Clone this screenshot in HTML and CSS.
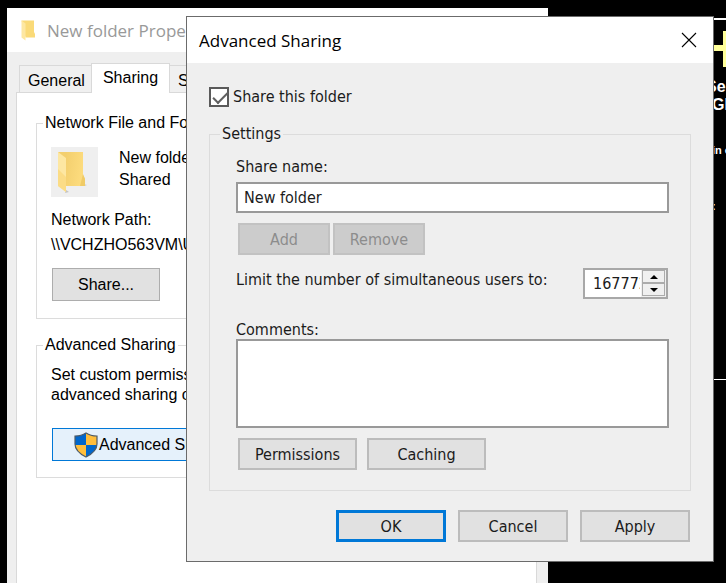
FILE: index.html
```html
<!DOCTYPE html>
<html lang="en">
<head>
    <meta charset="UTF-8">
    <meta name="viewport" content="width=device-width, initial-scale=1.0">
    <title>Advanced Sharing</title>
    <link rel="stylesheet" href="styles.css">
</head>
<body>
    <div class="desktop">
        <!-- Wallpaper info panel, mostly behind the dialog -->
        <div class="wallpaper">
            <div class="wallpaper-plus"></div>
            <p class="wallpaper-title">Se</p>
            <p class="wallpaper-title indent">GI</p>
            <p class="wallpaper-note indent">in o</p>
            <p class="wallpaper-colon indent">:</p>
        </div>

        <section class="window properties">
            <header class="properties-title">
                <svg class="folder-small" viewBox="0 0 30 42" aria-hidden="true">
                    <path d="M1 1h25v23l2 4v7H9z" fill="#fada78"/>
                    <path d="M1 1l8 6v34l-8-6z" fill="#fde7a2"/>
                </svg>
                <h2>New folder Properties</h2>
            </header>
            <nav class="tabs">
                <button class="tab">General</button>
                <button class="tab active">Sharing</button>
                <button class="tab">Security</button>
            </nav>
            <div class="panel">
                <fieldset class="group network">
                    <legend>Network File and Folder Sharing</legend>
                    <div class="folder-row">
                        <div class="folder-box">
                            <svg class="folder-large" viewBox="0 0 30 42" aria-hidden="true">
                                <defs>
                                    <linearGradient id="folderBack" x1="0" y1="0" x2="1" y2="0.2">
                                        <stop offset="0.3" stop-color="#f3cf6e"/>
                                        <stop offset="1" stop-color="#fddc7e"/>
                                    </linearGradient>
                                </defs>
                                <path d="M9 39l3 2-4 1z" fill="#c4c4c4"/>
                                <path d="M27 33l3 1-2 1z" fill="#d0d0d0"/>
                                <path d="M1 1h25v23l2 4v7H9z" fill="url(#folderBack)"/>
                                <path d="M26 23l-3 12h5v-7z" fill="#f0cb66"/>
                                <path d="M1 1l8 6v34l-8-6z" fill="#fde7a2"/>
                                <path d="M1 18l8 8v15l-8-6z" fill="#fbdc86"/>
                            </svg>
                        </div>
                        <p>New folder<br>Shared</p>
                    </div>
                    <p class="path-label">Network Path:</p>
                    <p class="path">\\VCHZHO563VM\Users</p>
                    <button class="share-btn">Share...</button>
                </fieldset>
                <fieldset class="group advanced">
                    <legend>Advanced Sharing</legend>
                    <p>Set custom permissions, create multiple shares, and set other<br>advanced sharing options.</p>
                    <button class="advanced-btn">
                        <svg class="shield" viewBox="0 0 24 26" aria-hidden="true">
                            <path d="M12 1v12H1V4c5 0 8-1 11-3z" fill="#0067cc"/>
                            <path d="M12 1c3 2 6 3 11 3v9H12z" fill="#ffbe3b"/>
                            <path d="M1 13h11v12C6 22 2 18 1 13z" fill="#ffbe3b"/>
                            <path d="M12 13h11c-1 5-5 9-11 12z" fill="#0067cc"/>
                            <path d="M12 1c3 2 6 3 11 3v8c0 6-5 10-11 13C6 22 1 18 1 12V4c5 0 8-1 11-3z" fill="none" stroke="#4d5b66" stroke-width="1.2"/>
                        </svg>Advanced Sharing...
                    </button>
                </fieldset>
            </div>
        </section>

        <section class="window dialog">
            <header class="dialog-title">
                <h1>Advanced Sharing</h1>
                <button class="close-btn" aria-label="Close">
                    <svg viewBox="0 0 16 16" aria-hidden="true"><path d="M1 1l14 14M15 1L1 15" stroke="#000" stroke-width="1.1"/></svg>
                </button>
            </header>
            <form class="dialog-body">
                <label class="check-row"><input type="checkbox" checked>Share this folder</label>
                <fieldset class="group settings">
                    <legend>Settings</legend>
                    <label for="shareName">Share name:</label>
                    <input type="text" id="shareName" class="field" value="New folder">
                    <div class="name-buttons">
                        <button type="button" disabled>Add</button>
                        <button type="button" disabled>Remove</button>
                    </div>
                    <div class="limit-row">
                        <label for="userLimit">Limit the number of simultaneous users to:</label>
                        <div class="spinner">
                            <input type="text" id="userLimit" value="16777216">
                            <div class="spinner-buttons">
                                <button type="button" aria-label="Increase"><svg viewBox="0 0 8 4"><path d="M0 4l4-4 4 4z"/></svg></button>
                                <button type="button" aria-label="Decrease"><svg viewBox="0 0 8 4"><path d="M0 0l4 4 4-4z"/></svg></button>
                            </div>
                        </div>
                    </div>
                    <label for="comments" class="comments-label">Comments:</label>
                    <textarea id="comments" class="field comments"></textarea>
                    <div class="option-buttons">
                        <button type="button">Permissions</button>
                        <button type="button">Caching</button>
                    </div>
                </fieldset>
                <div class="actions">
                    <button type="button" class="default">OK</button>
                    <button type="button">Cancel</button>
                    <button type="button">Apply</button>
                </div>
            </form>
        </section>
    </div>
</body>
</html>
```
FILE: styles.css
```css
* {
    box-sizing: border-box;
    margin: 0;
    padding: 0;
}

body {
    background: #000;
    color: #000;
    font-family: "Liberation Sans", Arial, sans-serif;
    font-size: 16px;
}

button, input, textarea {
    font: inherit;
    color: inherit;
}

h1, h2 {
    font-family: "Open Sans", "Noto Sans", sans-serif;
    font-size: 17px;
    font-weight: 400;
    white-space: nowrap;
}

.desktop {
    position: relative;
    height: 100vh;
    overflow: hidden;
}

.window {
    position: absolute;
    background: #efefef;
}

/* Wallpaper */
.wallpaper {
    position: absolute;
    top: 18px;
    right: 0;
    width: 20px;
    height: 362px;
    border-top: 2px solid #fff;
    border-bottom: 1px solid #fff;
    color: #fff;
    font-weight: 700;
    overflow: hidden;
}

.wallpaper-plus {
    height: 36px;
    margin: 11px 0;
    background:
        linear-gradient(#ffff99, #ffff99) 17px 0 / 3px 36px no-repeat,
        linear-gradient(#ffff99, #ffff99) 0 14px / 20px 6px no-repeat;
}

.wallpaper-title {
    line-height: 18px;
}

.wallpaper-note {
    margin-top: 28px;
    font-size: 11px;
    line-height: 16px;
    white-space: nowrap;
}

.wallpaper-colon {
    margin-top: 40px;
    font-size: 11px;
    line-height: 16px;
}

.indent {
    padding-left: 6px;
}

/* Properties window */
.properties {
    top: 8px;
    bottom: -32px;
    left: 7px;
    right: 178px;
    display: flex;
    flex-direction: column;
}

.properties-title {
    display: flex;
    align-items: center;
    gap: 11px;
    height: 44px;
    padding-left: 14px;
    background: #fff;
}

.properties-title h2 {
    color: #999;
}

.folder-small {
    width: 15px;
    height: 21px;
}

.tabs {
    display: flex;
    align-items: flex-end;
    height: 40px;
    padding: 0 12px;
}

.tab {
    height: 27px;
    padding: 3px 6px 0 8px;
    border: 1px solid #d9d9d9;
    border-bottom: none;
    background: #f0f0f0;
}

.tab.active {
    height: 30px;
    margin: 0 -1px -1px;
    padding: 0 11px 1px;
    background: #fff;
    z-index: 1;
}

.panel {
    flex: 1;
    margin: 0 11px 0 9px;
    padding: 20px 19px;
    border: 1px solid #d9d9d9;
    background: #fff;
}

.group {
    min-width: 0;
    border: 1px solid #dcdcdc;
}

.group legend {
    margin-left: -8px;
    padding: 0 2px;
    line-height: 20px;
}

.properties .group {
    padding: 0 14px;
    white-space: nowrap;
}

.network {
    height: 206px;
    margin-bottom: 16px;
}

.folder-row {
    display: flex;
    gap: 21px;
    margin-top: 14px;
    line-height: 22px;
}

.folder-box {
    display: flex;
    align-items: center;
    justify-content: center;
    width: 47px;
    height: 50px;
    padding-right: 6px;
    background: #efefef;
}

.folder-large {
    width: 30px;
    height: 42px;
}

.path-label {
    margin-top: 13px;
    line-height: 20px;
}

.path {
    margin-top: 5px;
    line-height: 20px;
}

.share-btn {
    width: 108px;
    height: 33px;
    margin: 13px 0 0 1px;
    border: 1px solid #adadad;
    background: #e1e1e1;
}

.advanced {
    height: 143px;
}

.advanced p {
    margin-top: 10px;
    line-height: 20px;
    overflow: hidden;
}

.advanced-btn {
    display: flex;
    align-items: center;
    width: 232px;
    height: 33px;
    margin: 23px 0 0 1px;
    padding-left: 21px;
    border: 1px solid #0078d7;
    background: #e5f1fb;
}

.shield {
    width: 24px;
    height: 26px;
    margin-right: 1px;
}

/* Advanced Sharing dialog */
.dialog {
    top: 16px;
    left: 186px;
    right: 12px;
    border: 1px solid #6b6b6b;
    color: #1b1b1b;
    font-family: "DejaVu Sans Condensed", "Noto Sans", sans-serif;
}

.dialog-title {
    display: flex;
    align-items: center;
    justify-content: space-between;
    height: 46px;
    padding: 0 16px 0 12px;
    background: #fff;
}

.dialog-title h1 {
    color: #000;
}

.close-btn {
    width: 16px;
    height: 16px;
    border: none;
    background: none;
}

.close-btn svg {
    display: block;
}

.dialog-body {
    padding: 23px 22px 19px;
}

.check-row {
    display: flex;
    align-items: center;
    gap: 4px;
    line-height: 22px;
}

.check-row input {
    appearance: none;
    width: 20px;
    height: 20px;
    border: 2px solid #5a5a5a;
    background: #fff;
}

.check-row input:checked::before {
    content: "";
    display: block;
    width: 13px;
    height: 6px;
    margin: 3px 0 0 2px;
    border-left: 2px solid #606060;
    border-bottom: 2px solid #606060;
    transform: rotate(-45deg);
}

.settings {
    margin-top: 16px;
    padding: 12px 21px 20px 26px;
}

.settings legend {
    margin-left: -16px;
}

.settings label {
    display: block;
    line-height: 22px;
}

.field {
    display: block;
    width: 100%;
    height: 31px;
    margin-top: 4px;
    padding: 0 6px;
    border: 2px solid #999;
    background: #fff;
}

.comments {
    height: 89px;
    margin-top: 0;
    resize: none;
}

.dialog-body button {
    height: 32px;
    border: 2px solid #bcbcbc;
    background: #e1e1e1;
}

.name-buttons,
.option-buttons {
    display: flex;
    gap: 3px;
    margin: 10px 0 0 2px;
}

.name-buttons button {
    width: 92px;
}

.dialog-body button:disabled {
    border-color: #c2c2c2;
    background: #ccc;
    color: #8c8c8c;
}

.limit-row {
    display: flex;
    justify-content: space-between;
    height: 51px;
    margin: 13px 0 2px;
    padding-right: 1px;
}

.limit-row label {
    padding-top: 1px;
}

.spinner {
    display: flex;
    width: 85px;
    height: 31px;
    border: 2px solid #a8a8a8;
}

.spinner input {
    flex: 1;
    min-width: 0;
    padding: 0 1px 0 8px;
    border: none;
    background: #fff;
}

.spinner-buttons {
    display: flex;
    flex-direction: column;
    width: 25px;
    padding: 0 1px 1px;
    background: #f0f0f0;
}

.dialog-body .spinner-buttons button {
    display: flex;
    flex: 1;
    align-items: center;
    justify-content: center;
    height: auto;
    border: 1px solid #acacac;
    background: #f0f0f0;
}

.spinner-buttons svg {
    width: 8px;
    height: 4px;
}

.settings .comments-label {
    line-height: 18px;
}

.option-buttons {
    gap: 10px;
}

.option-buttons button {
    width: 119px;
}

.actions {
    display: flex;
    justify-content: flex-end;
    gap: 12px;
    margin-top: 19px;
    padding-right: 1px;
}

.actions button {
    width: 110px;
}

.dialog-body .actions .default {
    border: 3px solid #0078d7;
}
```
